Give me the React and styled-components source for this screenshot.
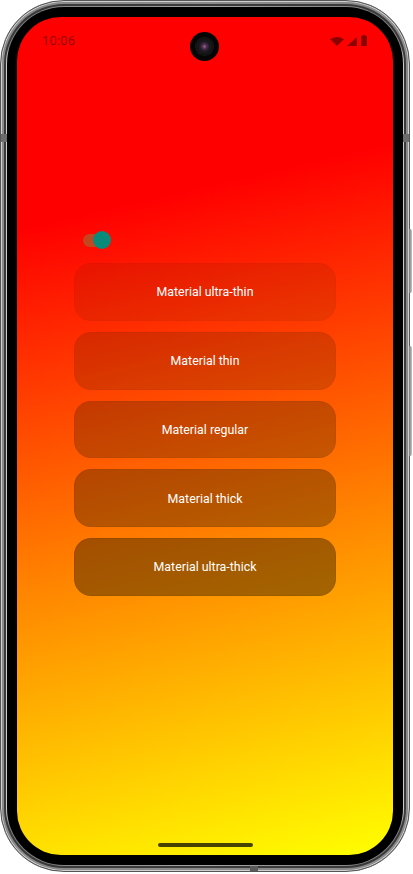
import React, { useState } from "react";
import styled, { createGlobalStyle } from "styled-components";

const Global = createGlobalStyle`
  html, body { margin: 0; padding: 0; background: #ffffff; }
  body { font-family: Roboto, "Noto Sans", sans-serif; }
  * { box-sizing: border-box; }
`;

const Stage = styled.div`
  width: 413px;
  height: 874px;
`;

const Rim = styled.div`
  position: relative;
  width: 410px;
  height: 872px;
  border-radius: 64px;
  padding: 6px;
  background: linear-gradient(90deg, #8a8a8a 0%, #dedede 1.2%, #7c7c7c 2%, #a5a5a5 50%, #7c7c7c 98%, #dedede 98.8%, #8a8a8a 100%);
  border: 1px solid #555;
  box-shadow: inset 0 0 0 1px #cfcfcf, inset 0 0 0 3px #8a8a8a, inset 0 0 0 5px #3a3a3a;
`;

const SideKey = styled.div`
  position: absolute;
  right: -3px;
  top: ${(p) => p.$top}px;
  width: 3px;
  height: ${(p) => p.$h}px;
  border-radius: 0 2px 2px 0;
  background: linear-gradient(90deg, #777, #c8c8c8);
`;

const AntennaV = styled.div`
  position: absolute;
  ${(p) => (p.$side === "left" ? "left: 0;" : "right: 0;")}
  top: 133px;
  width: 6px;
  height: 8px;
  background: #6c6c6c;
`;

const AntennaH = styled.div`
  position: absolute;
  bottom: 0;
  left: ${(p) => p.$left}px;
  width: 8px;
  height: 5px;
  background: #5a5a5a;
`;

const Bezel = styled.div`
  width: 100%;
  height: 100%;
  border-radius: 57px;
  background: #000;
  padding: 10px;
`;

const Screen = styled.div`
  position: relative;
  width: 100%;
  height: 100%;
  border-radius: 44px;
  overflow: hidden;
  background: linear-gradient(167deg, #ff0000 0%, #ff0000 23%, #ff8400 62%, #ffff00 100%);
  display: flex;
  flex-direction: column;
  align-items: center;
`;

const StatusBar = styled.div`
  width: 100%;
  height: 46px;
  padding: 16px 25px 0 25px;
  display: flex;
  justify-content: space-between;
  align-items: flex-start;
  color: rgba(0, 0, 0, 0.45);
`;

const Time = styled.span`
  font-family: Roboto, sans-serif;
  font-size: 13px;
  line-height: 16px;
  letter-spacing: 0.2px;
`;

const Icons = styled.div`
  display: flex;
  align-items: flex-end;
  gap: 3px;
  padding-top: 2px;
`;

const Camera = styled.div`
  position: absolute;
  top: 15px;
  left: 50%;
  margin-left: -15px;
  width: 29px;
  height: 29px;
  border-radius: 50%;
  background: #050505;
  display: flex;
  align-items: center;
  justify-content: center;
`;

const Lens = styled.div`
  width: 17px;
  height: 17px;
  border-radius: 50%;
  background: radial-gradient(circle at 50% 50%, #a06090 0%, #503050 18%, #1d1a22 40%, #121212 70%, #222 100%);
  box-shadow: 0 0 0 1px #1a1a1a;
`;

const Content = styled.div`
  width: 262px;
  margin-top: 168px;
  display: flex;
  flex-direction: column;
  gap: 11px;
`;

const SwitchRow = styled.div`
  height: 18px;
  padding-left: 9px;
  margin-bottom: 3px;
  display: flex;
  align-items: center;
`;

const Track = styled.button`
  position: relative;
  width: 27px;
  height: 13px;
  border: none;
  padding: 0;
  border-radius: 7px;
  background: ${(p) => (p.$on ? "rgba(170, 95, 45, 0.72)" : "rgba(120, 120, 120, 0.6)")};
  cursor: pointer;
`;

const Thumb = styled.span`
  position: absolute;
  top: -2.5px;
  left: ${(p) => (p.$on ? "10px" : "-2px")};
  width: 18px;
  height: 18px;
  border-radius: 50%;
  background: ${(p) => (p.$on ? "#0a8a7b" : "#e0e0e0")};
`;

const MaterialButton = styled.button`
  height: 57.75px;
  width: 100%;
  border-radius: 17px;
  border: 1px solid rgba(0, 0, 0, ${(p) => p.$alpha * 0.15});
  background: rgba(45, 25, 0, ${(p) => p.$alpha});
  color: #ffffff;
  font-family: Roboto, sans-serif;
  font-size: 12.4px;
  font-weight: 400;
  display: flex;
  align-items: center;
  justify-content: center;
  cursor: pointer;
`;

const Spacer = styled.div`
  flex: 1;
`;

const HomeBar = styled.div`
  width: 95px;
  height: 4px;
  border-radius: 2px;
  background: rgba(0, 0, 0, 0.72);
  margin-bottom: 8px;
`;

const items = [
  { label: "Material ultra-thin", alpha: 0.1 },
  { label: "Material thin", alpha: 0.18 },
  { label: "Material regular", alpha: 0.27 },
  { label: "Material thick", alpha: 0.35 },
  { label: "Material ultra-thick", alpha: 0.43 },
];

export default function App() {
  const [on, setOn] = useState(true);
  return (
    <>
      <Global />
      <Stage>
        <Rim>
          <SideKey $top={228} $h={64} />
          <SideKey $top={345} $h={110} />
          <AntennaV $side="left" />
          <AntennaV $side="right" />
          <AntennaH $left={249} />
          <Bezel>
            <Screen>
              <StatusBar>
                <Time>10:06</Time>
                <Icons>
                  <svg width="14" height="9" viewBox="0 0 14 9">
                    <path d="M0 2.2 Q7 -2.2 14 2.2 L7 9 Z" fill="currentColor" />
                  </svg>
                  <svg width="10" height="9" viewBox="0 0 10 9">
                    <path d="M0 9 L10 0 L10 9 Z" fill="currentColor" />
                  </svg>
                  <svg width="8" height="11" viewBox="0 0 8 11">
                    <path d="M2.5 0 H5.5 V1 H7 V11 H1 V1 H2.5 Z" fill="currentColor" />
                  </svg>
                </Icons>
              </StatusBar>
              <Camera>
                <Lens />
              </Camera>
              <Content>
                <SwitchRow>
                  <Track $on={on} onClick={() => setOn(!on)} aria-label="toggle">
                    <Thumb $on={on} />
                  </Track>
                </SwitchRow>
                {items.map((it) => (
                  <MaterialButton key={it.label} $alpha={it.alpha}>
                    {it.label}
                  </MaterialButton>
                ))}
              </Content>
              <Spacer />
              <HomeBar />
            </Screen>
          </Bezel>
        </Rim>
      </Stage>
    </>
  );
}
